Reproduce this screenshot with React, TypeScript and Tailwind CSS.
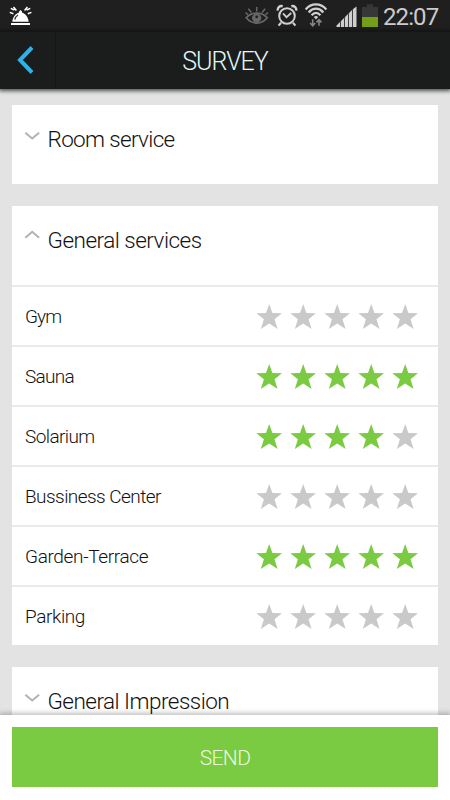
import React from 'react';

interface Service {
  name: string;
  rating: number;
  tracking: string;
}

const SERVICES: Service[] = [
  { name: 'Gym', rating: 0, tracking: 'tracking-[-0.9px]' },
  { name: 'Sauna', rating: 5, tracking: 'tracking-[-0.7px]' },
  { name: 'Solarium', rating: 4, tracking: 'tracking-[-0.6px]' },
  { name: 'Bussiness Center', rating: 0, tracking: 'tracking-[-0.55px]' },
  { name: 'Garden-Terrace', rating: 5, tracking: 'tracking-[-0.35px]' },
  { name: 'Parking', rating: 0, tracking: 'tracking-[-0.4px]' },
];

const Star: React.FC<{ filled: boolean }> = ({ filled }) => (
  <svg width="26" height="26" viewBox="0 0 26 26" className={filled ? 'text-[#7acb42]' : 'text-[#c9c9c9]'}>
    <path
      fill="currentColor"
      d="M13.2 0 L16.4 9 L26 9.3 L18.5 15.3 L21.6 25 L13.2 19.4 L4.8 25 L7.9 15.3 L0.3 9.3 L10 9 Z"
    />
  </svg>
);

const Chevron: React.FC<{ open?: boolean }> = ({ open }) => (
  <svg width="16" height="10" viewBox="0 0 16 10" fill="none" stroke="#b3b3b3" strokeWidth="2.1">
    <path d={open ? 'M1.3 7.7 L8.2 1.8 L15.1 7.7' : 'M1.3 1.7 L8.2 7.5 L15.1 1.7'} />
  </svg>
);

const StatusBar = () => (
  <div className="flex h-[31px] shrink-0 items-start bg-[#1f1f1f]">
    {/* Service bell */}
    <svg width="24" height="22" viewBox="0 0 24 22" className="mt-[5px] ml-[9px]">
      <path d="M3.3 16.8 C4 11.5 6.8 8.9 10 7.6 V6.4 L11.5 5 L13 6.4 V7.6 C16.2 8.9 19 11.5 19.7 16.8 Z" fill="#fff" />
      <path d="M2 18 H21 V20 H2 Z" fill="#fff" />
      <path d="M5.8 14.7 C6.3 12.2 7.4 10.9 9 10" stroke="#333" strokeWidth="1.2" fill="none" />
      <path
        d="M4.5 2 L7.4 5.4 M1.8 3.4 L5.4 5 M0.8 7.4 L4.4 8.8 M18.4 2 L15.6 5.4 M21.2 3.4 L17.6 5 M22.4 7.4 L18.8 8.8"
        stroke="#fff"
        strokeWidth="1.5"
      />
    </svg>

    {/* Smart stay eye */}
    <svg width="24" height="20" viewBox="0 0 24 20" className="mt-[6px] ml-[212px]" fill="none" stroke="#686868">
      <path d="M1.2 11.8 C7 5.6 16.5 5.6 22.3 11.8 C16.5 18.8 7 18.8 1.2 11.8 Z" strokeWidth="1.7" />
      <circle cx="11.7" cy="12" r="4.2" fill="#686868" />
      <circle cx="11.7" cy="10.8" r="1.4" fill="#1f1f1f" stroke="none" />
      <path d="M11.7 5.6 V1 M6.4 6.4 L3.3 2.7 M17 6.4 L20.2 2.7 M3 8.8 L0.6 6.5 M20.5 8.8 L22.9 6.5" strokeWidth="1.5" />
    </svg>

    {/* Alarm clock */}
    <svg width="22" height="24" viewBox="0 0 22 24" className="mt-[4px] ml-[7px]" fill="none" stroke="#cfcfcf">
      <circle cx="11" cy="12" r="7.8" strokeWidth="2" />
      <path d="M7 9.4 L10.5 13.2 L15.2 9" strokeWidth="1.8" />
      <path d="M1.7 6.7 C1.3 3.7 3.5 1.6 6.7 2.2 M20.3 6.7 C20.7 3.7 18.5 1.6 15.3 2.2" strokeWidth="2.5" />
      <path d="M5 18.8 L2.6 21.6 M17 18.8 L19.4 21.6" strokeWidth="2.2" />
    </svg>

    {/* Wi-Fi */}
    <svg width="24" height="25" viewBox="0 0 24 25" className="mt-[3px] ml-[6px]" fill="none">
      <path
        d="M1.7 6.4 C7.3 -0.3 16.5 -0.3 22.3 6.4 M4.7 9.4 C9 4.4 15 4.4 19.3 9.4 M7.6 12.3 C10.4 9.1 13.6 9.1 16.4 12.3"
        stroke="#cfcfcf"
        strokeWidth="2.3"
      />
      <path d="M9.8 14 C11.2 12.6 12.8 12.6 14.2 14 L12 16.4 Z" fill="#cfcfcf" />
      <path
        d="M8.7 16.3 V22.3 M6.2 20 L8.7 22.8 L11.2 20 M15 22.8 V17 M12.5 19.4 L15 16.6 L17.5 19.4"
        stroke="#858585"
        strokeWidth="1.6"
      />
    </svg>

    {/* Signal strength */}
    <svg width="21" height="22" viewBox="0 0 21 22" className="mt-[6px] ml-[8px]" fill="#cfcfcf">
      <path d="M0.5 19.5 L4 16 V21 H0.5 Z M4.8 15.2 L8 12 V21 H4.8 Z M8.8 11.2 L12 8 V21 H8.8 Z M12.8 7.2 L16 4 V21 H12.8 Z M16.8 3.2 L20.5 0.5 V21 H16.8 Z" />
    </svg>

    {/* Battery */}
    <svg width="16" height="23" viewBox="0 0 16 23" className="mt-[4px] ml-[5px]">
      <path d="M0 3 H5 V0.3 H11 V3 H16 V13 H0 Z" fill="#373737" />
      <path d="M0 13 H16 V23 H0 Z" fill="#739f16" />
    </svg>

    <span className="mt-[3px] ml-[5px] text-[24px] leading-[28px] tracking-[-0.9px] text-[#cbcbcb]">22:07</span>
  </div>
);

const Header = () => (
  <div className="relative z-10 flex h-[58px] shrink-0 border-t border-[#151515] bg-[#1b1d1c] shadow-[0_1px_4px_1px_rgba(0,0,0,0.65)]">
    <button className="flex w-[56px] items-center border-r border-[#151616] pb-[2px] pl-[16px]">
      <svg width="19" height="28" viewBox="0 0 19 28" fill="none" stroke="#2fb2e8" strokeWidth="4">
        <path d="M16 1.5 L4 14 L16 26.5" />
      </svg>
    </button>
    <h1 className="mr-[56px] flex-1 text-center text-[25px] leading-[59px] font-light tracking-[-1px] text-[#e0f8f8]">
      SURVEY
    </h1>
  </div>
);

const SectionTitle: React.FC<{ title: string; open?: boolean; tracking: string }> = ({ title, open, tracking }) => (
  <div className="flex items-start pl-[12px]">
    <div className={open ? 'mt-[24px]' : 'mt-[26px]'}>
      <Chevron open={open} />
    </div>
    <h2 className={`mt-[19px] ml-[7.5px] text-[22.5px] leading-[30px] font-light whitespace-nowrap text-[#111] ${tracking}`}>
      {title}
    </h2>
  </div>
);

const ServiceRow: React.FC<{ service: Service }> = ({ service }) => (
  <div className="flex h-[60px] items-center justify-between border-t-2 border-[#ebebeb] pt-[2px] pr-5 pl-[13px]">
    <span className={`text-[19px] leading-[24px] font-light whitespace-nowrap text-[#111] ${service.tracking}`}>
      {service.name}
    </span>
    <div className="flex gap-2">
      {[1, 2, 3, 4, 5].map((n) => (
        <Star key={n} filled={n <= service.rating} />
      ))}
    </div>
  </div>
);

const App: React.FC = () => {
  return (
    <div className="flex h-[800px] w-[450px] flex-col overflow-hidden bg-[#e3e3e3] font-['Roboto',sans-serif]">
      <StatusBar />
      <Header />

      {/* Survey sections */}
      <div className="flex min-h-0 flex-1 flex-col gap-[22px] overflow-hidden px-3 pt-4">
        <div className="h-[79px] shrink-0 bg-white">
          <SectionTitle title="Room service" tracking="tracking-[-0.65px]" />
        </div>

        <div className="shrink-0 bg-white">
          <div className="h-[79px]">
            <SectionTitle title="General services" open tracking="tracking-[-0.5px]" />
          </div>
          {SERVICES.map((service) => (
            <ServiceRow key={service.name} service={service} />
          ))}
        </div>

        <div className="h-[79px] shrink-0 bg-white">
          <SectionTitle title="General Impression" tracking="tracking-[-0.52px]" />
        </div>
      </div>

      {/* Footer */}
      <div className="relative z-10 h-[85px] shrink-0 bg-white px-3 pt-3 shadow-[0_-1px_5px_1px_rgba(0,0,0,0.25)]">
        <button className="h-[60px] w-full bg-[#7aca42] pt-[3px] text-[21px] font-light tracking-[-0.6px] text-[#eaf7df]">
          SEND
        </button>
      </div>
    </div>
  );
};

export default App;
